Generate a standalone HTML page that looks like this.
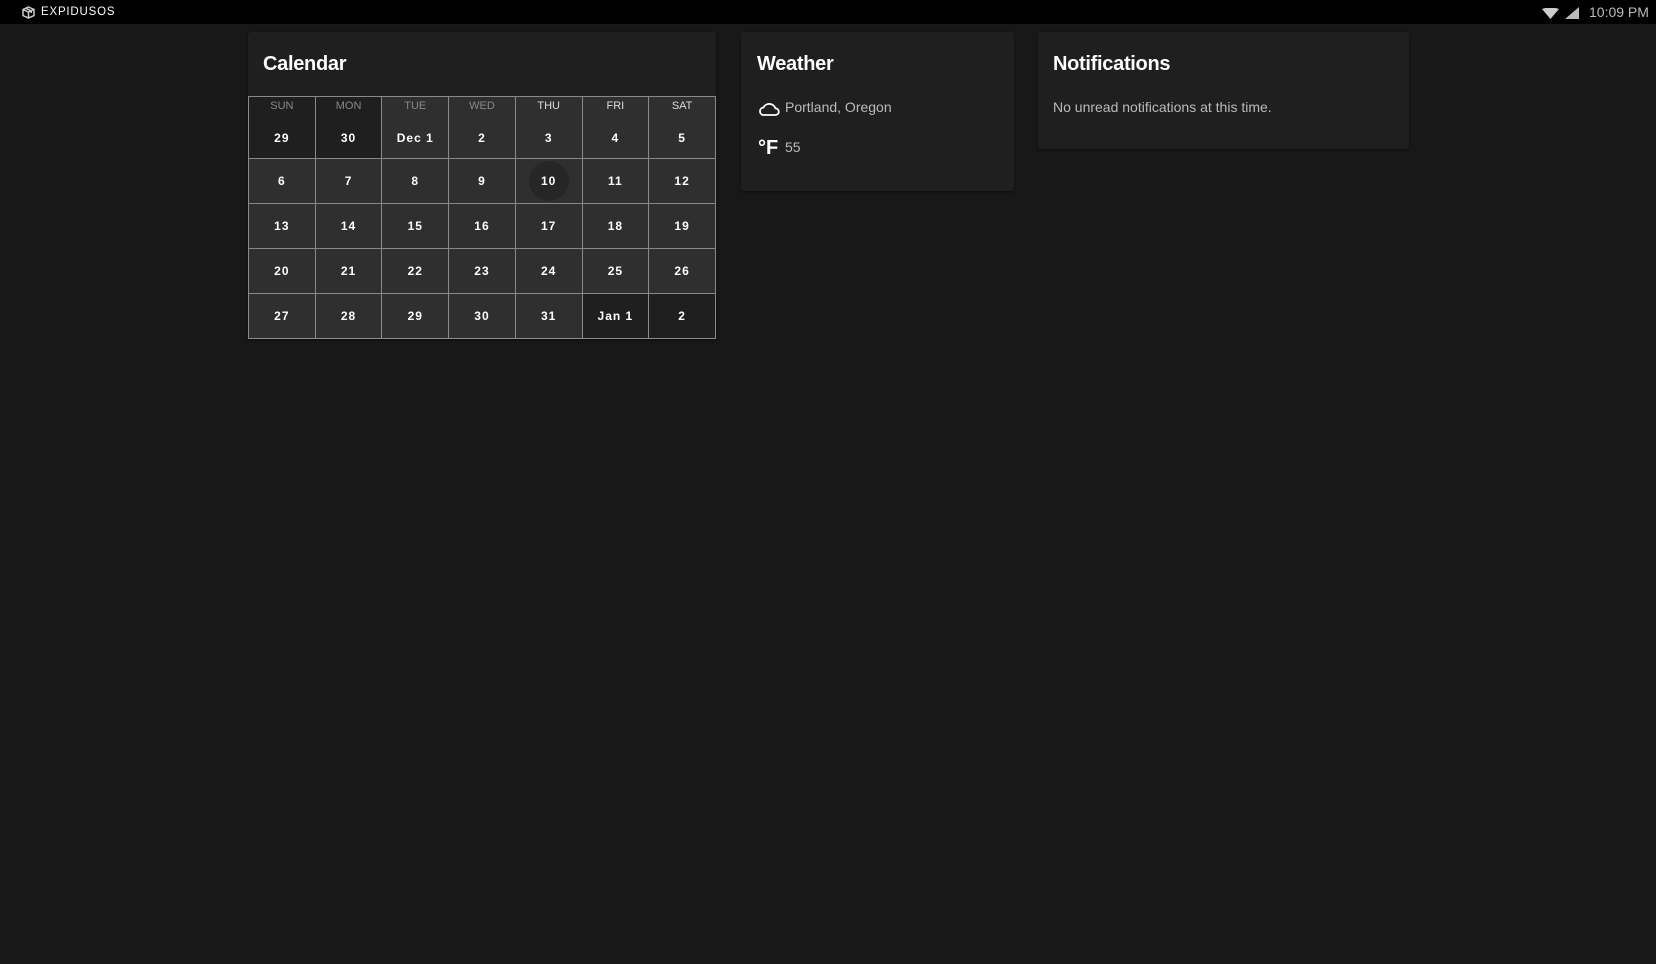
<!DOCTYPE html>
<html><head><meta charset="utf-8"><style>
*{margin:0;padding:0;box-sizing:border-box}
body{width:1656px;height:964px;background:#181818;font-family:"Liberation Sans",sans-serif;color:#fff;position:relative;overflow:hidden}
.bar{position:absolute;left:0;top:0;width:1656px;height:24px;background:#000}
.card{position:absolute;background:#1f1f1f;border-radius:3px;box-shadow:0 1px 3px rgba(0,0,0,.5)}
.t{position:absolute;font-size:20px;line-height:24px;font-weight:bold;letter-spacing:-0.3px}
.grid{position:absolute;left:0;top:64px;width:468px;border-collapse:collapse;table-layout:fixed}
.grid td{border:1px solid #8a8a8a;text-align:center;font-size:12px;letter-spacing:1px;height:45px;background:#2f2f2f;position:relative;font-weight:bold}
.grid td.d{background:#1f1f1f}
.grid tr.f td{height:62px;vertical-align:top}
.grid .h{display:block;font-size:11px;letter-spacing:0;margin-top:3px;color:#888;font-weight:normal}
.grid .h.w{color:#ddd}
.grid .n{display:block;margin-top:19px}
.today{display:inline-block;width:40px;height:40px;border-radius:50%;background:#262626;line-height:40px}
.txt{position:absolute;font-size:14px;color:#bbb;line-height:16px}
</style></head><body>
<div class="bar">
<svg style="position:absolute;left:22px;top:6px" width="13" height="13" viewBox="0 0 13 13"><path d="M6.5 1 L12 3.5 V9.5 L6.5 12 L1 9.5 V3.5Z M1 3.5 L6.5 6 L12 3.5 M6.5 6V12 M3.7 2.2 L9.3 4.8 V7" fill="none" stroke="#ccc" stroke-width="1.5"/></svg>
<div style="position:absolute;left:41px;top:5px;font-size:11.5px;letter-spacing:0.8px;line-height:14px">EXPIDUSOS</div>
<svg style="position:absolute;left:1542px;top:8px" width="17" height="11" viewBox="0 0 17 11"><path d="M0 1 Q8.5 -2 17 1 L8.5 11Z" fill="#ccc"/></svg>
<svg style="position:absolute;left:1565px;top:7px" width="14" height="12" viewBox="0 0 14 12"><path d="M14 0V12H0Z" fill="#bbb"/></svg>
<div style="position:absolute;left:1589px;top:4px;font-size:14px;color:#bbb;line-height:16px">10:09 PM</div>
</div>

<div class="card" style="left:248px;top:32px;width:468px;height:307px">
<div class="t" style="left:15px;top:20px">Calendar</div>
<table class="grid">
<tr class="f"><td class="d"><span class="h">SUN</span><span class="n">29</span></td><td class="d"><span class="h">MON</span><span class="n">30</span></td><td><span class="h">TUE</span><span class="n">Dec 1</span></td><td><span class="h">WED</span><span class="n">2</span></td><td><span class="h w">THU</span><span class="n">3</span></td><td><span class="h w">FRI</span><span class="n">4</span></td><td><span class="h w">SAT</span><span class="n">5</span></td></tr>
<tr><td>6</td><td>7</td><td>8</td><td>9</td><td><span class="today">10</span></td><td>11</td><td>12</td></tr>
<tr><td>13</td><td>14</td><td>15</td><td>16</td><td>17</td><td>18</td><td>19</td></tr>
<tr><td>20</td><td>21</td><td>22</td><td>23</td><td>24</td><td>25</td><td>26</td></tr>
<tr><td>27</td><td>28</td><td>29</td><td>30</td><td>31</td><td class="d">Jan 1</td><td class="d">2</td></tr>
</table>
</div>

<div class="card" style="left:741px;top:32px;width:273px;height:159px">
<div class="t" style="left:16px;top:20px">Weather</div>
<svg style="position:absolute;left:17px;top:70px" width="22" height="14" viewBox="0 0 22 14"><path d="M5 13 H17.5 A3.3 3.3 0 0 0 17.5 6.4 A6.5 6.5 0 0 0 5.5 5.5 A3.8 3.8 0 0 0 5 13Z" fill="none" stroke="#fff" stroke-width="1.8"/></svg>
<div class="txt" style="left:44px;top:67px">Portland, Oregon</div>
<div style="position:absolute;left:17px;top:105px;font-size:20px;font-weight:bold;line-height:22px">°F</div>
<div class="txt" style="left:44px;top:107px">55</div>
</div>

<div class="card" style="left:1038px;top:32px;width:371px;height:117px">
<div class="t" style="left:15px;top:20px">Notifications</div>
<div class="txt" style="left:15px;top:67px">No unread notifications at this time.</div>
</div>
</body></html>
